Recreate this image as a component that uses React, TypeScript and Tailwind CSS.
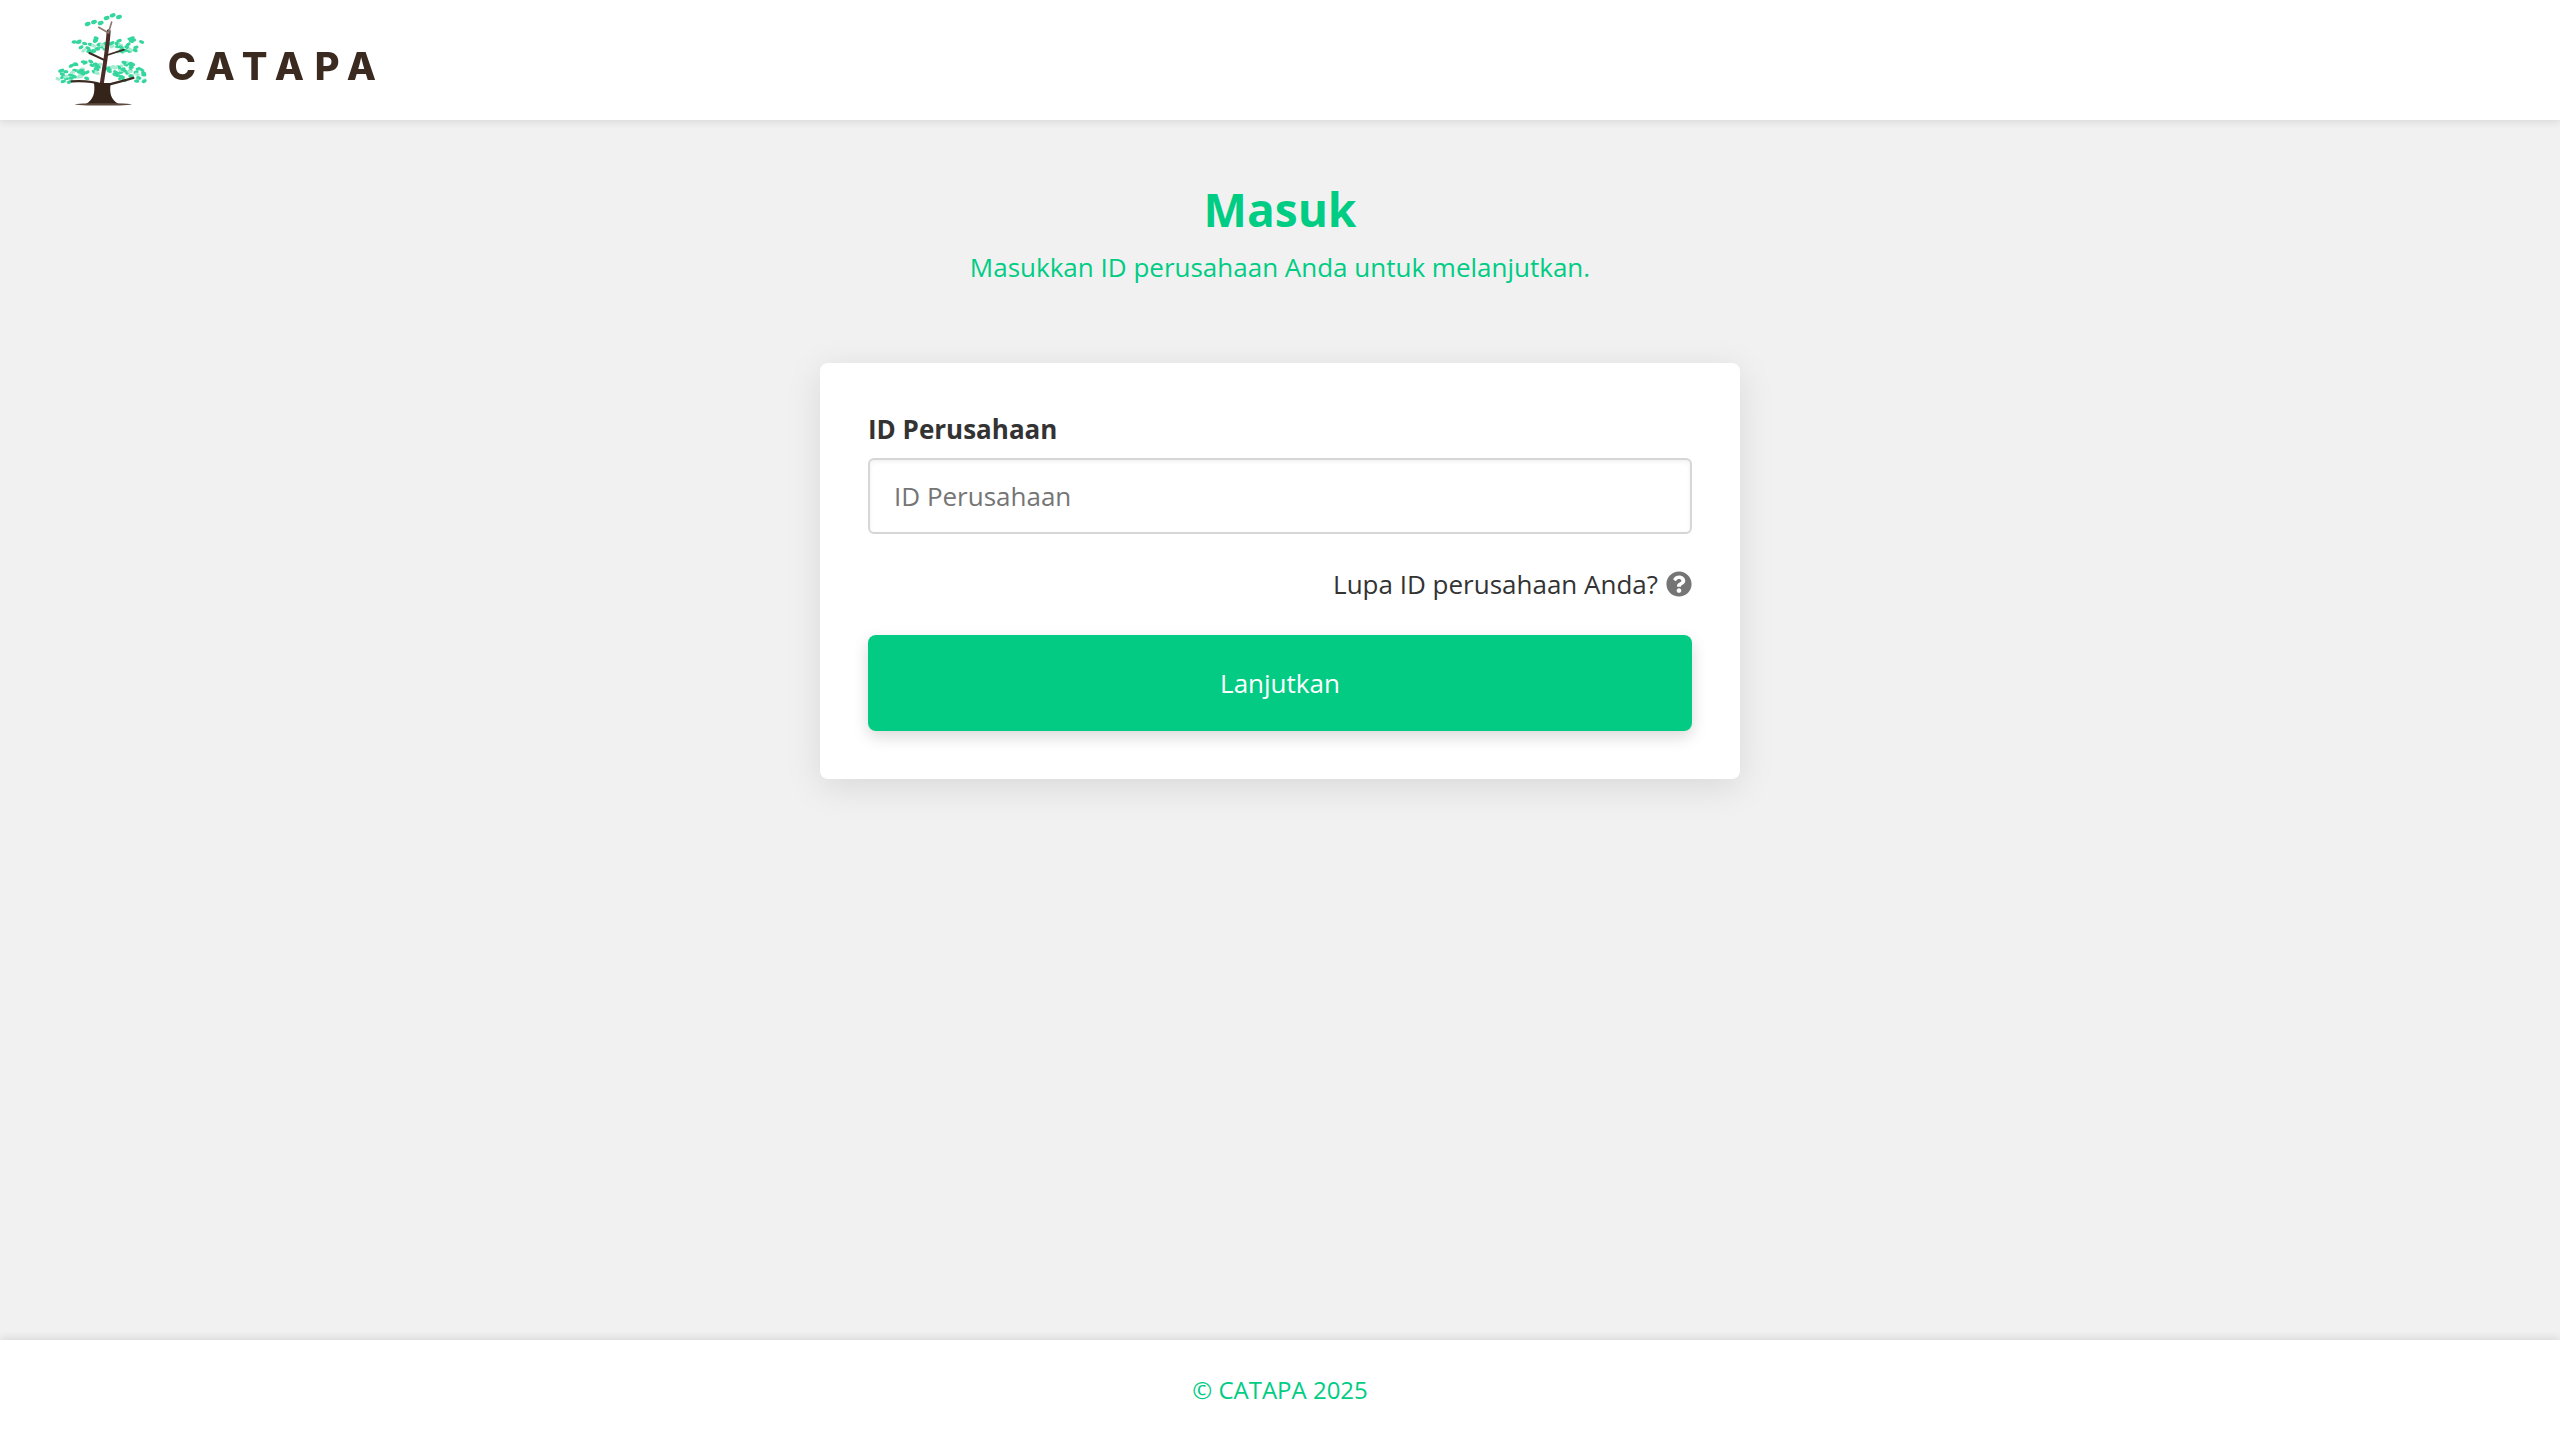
import React from "react";
import { FaQuestionCircle } from "react-icons/fa";

const clusters: [number, number, number, number, number, number][] = [
  [180, 130, 52, 24, 27, 8],
  [288, 130, 48, 24, 27, -6],
  [150, 212, 70, 28, 46, -14],
  [288, 212, 70, 28, 44, 14],
];
const top: [number, number][] = [[173, 68], [192, 62], [212, 65], [230, 50], [248, 42], [267, 47]];

function leaves() {
  const out: React.ReactElement[] = [];
  let seed = 11;
  const rnd = () => {
    seed = (seed * 16807) % 2147483647;
    return seed / 2147483647;
  };
  clusters.forEach(([cx, cy, rx, ry, n, tilt], c) => {
    const t = (tilt * Math.PI) / 180;
    for (let i = 0; i < n; i++) {
      const a = rnd() * Math.PI * 2;
      const r = Math.sqrt(rnd());
      const dx = Math.cos(a) * r * rx;
      const dy = Math.sin(a) * r * ry;
      const x = cx + dx * Math.cos(t) - dy * Math.sin(t);
      const y = cy + dx * Math.sin(t) + dy * Math.cos(t);
      out.push(
        <ellipse key={`${c}-${i}`} cx={x} cy={y} rx="8" ry="5" fill={i % 4 === 0 ? "#a8ecd0" : "#35d69d"} transform={`rotate(${rnd() * 70 - 35} ${x} ${y})`} />
      );
    }
  });
  top.forEach(([x, y], i) => out.push(<ellipse key={`t${i}`} cx={x} cy={y} rx="9" ry="6" fill="#35d69d" transform={`rotate(-20 ${x} ${y})`} />));
  return out;
}

function Tree() {
  return (
    <svg viewBox="60 20 320 310" width="106.67" height="103.33" className="shrink-0 blur-[0.5px]">
      {leaves()}
      <g fill="none" stroke="#3b2a20" strokeLinecap="round">
        <path d="M215 250 C222 200 232 150 236 90" strokeWidth="12" stroke="#4a2c28" />
        <path d="M236 92 L245 62" strokeWidth="5" stroke="#8a7a70" />
        <path d="M236 95 L206 78" strokeWidth="5" stroke="#8a7a70" />
        <path d="M227 178 L178 155" strokeWidth="6" />
        <path d="M230 162 L282 145" strokeWidth="5" />
        <path d="M215 250 C190 240 160 238 125 240" strokeWidth="7" />
        <path d="M222 255 C250 245 275 240 310 230" strokeWidth="7" />
      </g>
      <path d="M192 245 L242 245 C238 275 242 295 266 308 L168 308 C190 295 196 275 192 245 Z" fill="#35241a" />
      <ellipse cx="220" cy="309" rx="86" ry="3.5" fill="#5c4a3e" />
    </svg>
  );
}

export default function App() {
  return (
    <div className="min-h-screen flex flex-col bg-[#f1f1f1] font-['Open_Sans',sans-serif]">
      <header className="h-[120px] shrink-0 bg-white shadow-[0_2px_8px_rgba(0,0,0,0.1)] flex items-center pl-[50px] relative">
        <Tree />
        <span className="font-['Inter',sans-serif] font-extrabold text-[38px] leading-none tracking-[0.28em] text-[#3b2a20] ml-[11px] mt-[11px] blur-[0.4px]">CATAPA</span>
      </header>
      <main className="flex-1 flex flex-col items-center pt-[57px]">
        <h1 className="text-[46px] leading-[64px] font-bold text-[#00cc84]">Masuk</h1>
        <p className="text-[26px] leading-[38px] text-[#00cc84] mt-[7px]">Masukkan ID perusahaan Anda untuk melanjutkan.</p>
        <div className="w-[920px] mt-[77px] bg-white rounded-lg p-12 shadow-[0_8px_36px_rgba(0,0,0,0.1)]">
          <label className="block text-[26px] leading-[38px] font-bold text-[#333333] mt-[-1px]">ID Perusahaan</label>
          <input
            placeholder="ID Perusahaan"
            className="block w-full h-[76px] mt-[10px] px-6 border-2 border-[#d6d6d6] rounded-md bg-white text-[26px] shadow-[inset_0_2px_4px_rgba(0,0,0,0.06)] placeholder:text-[#757575] outline-none"
          />
          <div className="flex items-center justify-end gap-2 mt-[31px] text-[26px] leading-[38px] text-[#333333]">
            <span>Lupa ID perusahaan Anda?</span>
            <FaQuestionCircle className="text-[#757575] w-[26px] h-[26px]" />
          </div>
          <button className="block w-full h-[96px] mt-[32px] rounded-lg bg-[#03cb84] text-white text-[26px] font-medium shadow-[0_6px_16px_rgba(0,0,0,0.15)]">Lanjutkan</button>
        </div>
      </main>
      <footer className="h-[100px] shrink-0 bg-white flex items-center justify-center text-[24px] text-[#00cc84] shadow-[0_-2px_8px_rgba(0,0,0,0.1)] relative">© CATAPA 2025</footer>
    </div>
  );
}
